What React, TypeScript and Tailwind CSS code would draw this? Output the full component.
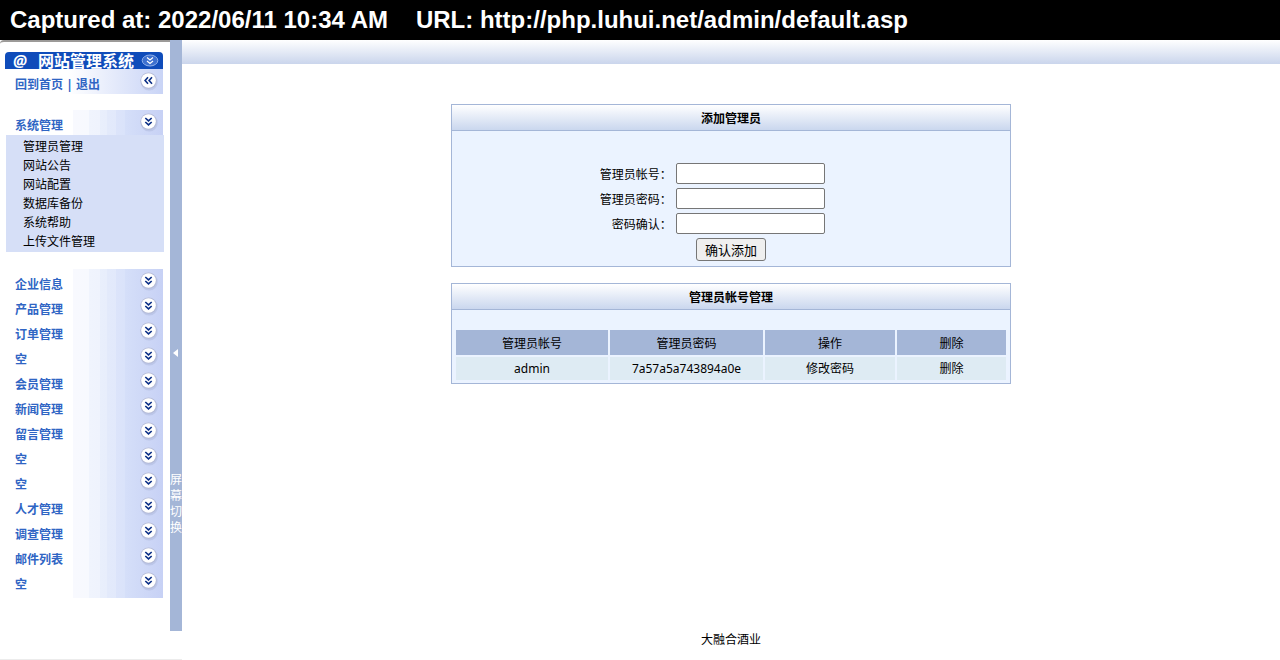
import { useState } from "react";

const topMenus = ["企业信息", "产品管理", "订单管理", "空", "会员管理", "新闻管理", "留言管理", "空", "空", "人才管理", "调查管理", "邮件列表", "空"];

const systemLinks = ["管理员管理", "网站公告", "网站配置", "数据库备份", "系统帮助", "上传文件管理"];

const formFields = [
  { id: "account", label: "管理员帐号：", type: "text" },
  { id: "password", label: "管理员密码：", type: "password" },
  { id: "confirm", label: "密码确认：", type: "password" },
];

const admins = [{ id: 1, name: "admin", password: "7a57a5a743894a0e" }];

// banded blue strip behind the round icons
const stripClass =
  "bg-[linear-gradient(to_right,#f8f9fe_0px,#f7f9fe_16px,#f0f4fd_16px,#eff3fd_27px,#e9effc_27px,#e8eefc_34px,#e3eafb_34px,#e2e9fb_43px,#dce4fa_43px,#dae3fa_52px,#d5dff9_52px,#c7d1f5_90px)]";

const RoundIcon = ({ left = false }: { left?: boolean }) => (
  <svg width="20" height="20" viewBox="0 0 20 20" aria-hidden="true">
    <circle cx="10.2" cy="10.8" r="8.6" fill="#a9b3d8" opacity="0.45" />
    <circle cx="9.6" cy="9.6" r="8.2" fill="#b4bad6" />
    <circle cx="9.5" cy="9.5" r="7.3" fill="#fff" />
    <g fill="none" stroke="#0b2f86" strokeWidth="1.6" transform={left ? "rotate(90 9.5 9.5)" : undefined}>
      <path d="M6.3 6 L9.5 8.9 L12.7 6" />
      <path d="M6.3 10 L9.5 12.9 L12.7 10" />
    </g>
  </svg>
);

const MenuTitle = ({ title }: { title: string }) => (
  <button className="flex h-[25px] w-full text-left font-bold text-[#2f65c4]">
    <span className="w-[68px] shrink-0 pt-2 pl-2.5 leading-4">{title}</span>
    <span className={`flex h-full flex-1 justify-end pt-0.5 pr-1 ${stripClass}`}>
      <RoundIcon />
    </span>
  </button>
);

const Panel = ({ title, children }: { title: string; children: React.ReactNode }) => (
  <section className="w-[560px] max-w-full border border-[#a4b6d7] bg-[#ebf3ff]">
    <h2 className="h-[26px] border-b border-[#a4b6d7] bg-linear-to-b from-white to-[#cad7ee] text-center leading-7 font-bold">
      {title}
    </h2>
    {children}
  </section>
);

const App = () => {
  const [sidebarOpen, setSidebarOpen] = useState(true);

  return (
    <div className="flex min-h-screen flex-col bg-white font-['Noto_Sans','Noto_Sans_CJK_SC',sans-serif] text-[12px] leading-4 text-black">
      {/* Capture bar */}
      <header className="flex h-10 items-center gap-7 bg-black px-2.5 font-['Liberation_Sans',Arial,sans-serif] text-2xl font-bold text-white">
        <span>Captured at: 2022/06/11 10:34 AM</span>
        <span>URL: http://php.luhui.net/admin/default.asp</span>
      </header>

      <div className="flex flex-1">
        {/* Left frame */}
        <div className="flex flex-col border-b border-[#ececec] pb-7">
          <div className="flex flex-1">
            {sidebarOpen && (
              <nav className="w-[170px] rounded-tl border-t-2 border-[#9c9a98] pt-2.5 pr-[7px] pl-[5px]">
                <div className="flex h-[17px] items-center rounded-t-sm bg-[#0f4cba] pr-1 pl-2 text-white">
                  <span className="w-[25px] text-[16px] leading-3 font-bold italic">@</span>
                  <span className="text-[16px] leading-3 font-bold">网站管理系统</span>
                  <svg className="ml-auto" width="18" height="13" viewBox="0 0 18 13" aria-hidden="true">
                    <ellipse cx="9" cy="6.5" rx="7.8" ry="5.5" fill="#3d70cf" stroke="#8fb0ea" />
                    <path d="M6 3.5 L9 6 L12 3.5 M6 7 L9 9.5 L12 7" fill="none" stroke="#fff" strokeWidth="1.2" />
                  </svg>
                </div>
                <div className="flex h-[25px] bg-linear-to-r from-white from-40% to-[#c9d4f6] pr-1 pl-2.5 text-[#2f65c4]">
                  <p className="pt-2 leading-4 font-bold">
                    <a href="#home">回到首页</a> | <a href="#logout">退出</a>
                  </p>
                  <span className="ml-auto pt-0.5">
                    <RoundIcon left />
                  </span>
                </div>

                <div className="mt-4">
                  <MenuTitle title="系统管理" />
                </div>
                <ul className="-mr-px ml-px bg-[#d6dff7] pt-0.5 pb-px pl-[17px] leading-[19px]">
                  {systemLinks.map((link) => (
                    <li key={link}>
                      <a href="#admin">{link}</a>
                    </li>
                  ))}
                </ul>

                <div className="mt-[17px]">
                  {topMenus.map((title, i) => (
                    <MenuTitle key={i} title={title} />
                  ))}
                  <div className={`ml-[68px] h-1 ${stripClass}`} />
                </div>
              </nav>
            )}
            <button
              className="flex w-3 flex-col items-center justify-start bg-[#a4b6d7] pt-[309px] text-white"
              onClick={() => setSidebarOpen(!sidebarOpen)}
            >
              <svg width="6" height="8" viewBox="0 0 6 8" aria-hidden="true">
                <path d="M5 0 V8 L0 4 Z" fill="#fff" />
              </svg>
              <span className="mt-[115px] w-3 leading-4 break-all">屏幕切换</span>
            </button>
          </div>
        </div>

        {/* Content frame */}
        <main className="flex min-w-0 flex-1 flex-col items-center">
          <div className="h-6 w-full bg-linear-to-b from-white to-[#cad5ec]" />

          <div className="mt-10 flex max-w-full flex-col gap-4">
            <Panel title="添加管理员">
              <form className="pt-[30px] pb-1" onSubmit={(e) => e.preventDefault()}>
                {formFields.map((field) => (
                  <div key={field.id} className="flex h-[25px] items-center pl-px">
                    <label htmlFor={field.id} className="w-2/5 pt-0.5 pr-1 text-right">
                      {field.label}
                    </label>
                    <input
                      id={field.id}
                      type={field.type}
                      className="h-[21px] w-[149px] rounded-xs border border-[#767676] bg-white px-0.5"
                    />
                  </div>
                ))}
                <div className="flex h-[26px] items-center justify-center">
                  <button
                    type="submit"
                    className="h-[23px] rounded-[3px] border border-[#767676] bg-[#efefef] px-2 pt-0.5 text-[13px]"
                  >
                    确认添加
                  </button>
                </div>
              </form>
            </Panel>

            <Panel title="管理员帐号管理">
              <div className="px-0.5 pt-[18px] pb-px">
                <table className="w-full table-fixed border-separate border-spacing-0.5 text-center">
                  <thead>
                    <tr className="h-[25px] bg-[#a4b6d7]">
                      <th className="w-[152px] pt-0.5 font-normal">管理员帐号</th>
                      <th className="w-[153px] pt-0.5 font-normal">管理员密码</th>
                      <th className="w-[130px] pt-0.5 font-normal">操作</th>
                      <th className="pt-0.5 font-normal">删除</th>
                    </tr>
                  </thead>
                  <tbody>
                    {admins.map((admin) => (
                      <tr key={admin.id} className="h-[23px] bg-[#deebf3]">
                        <td>{admin.name}</td>
                        <td>{admin.password}</td>
                        <td>
                          <a href="#edit">修改密码</a>
                        </td>
                        <td>
                          <a href="#delete">删除</a>
                        </td>
                      </tr>
                    ))}
                  </tbody>
                </table>
              </div>
            </Panel>
          </div>

          <footer className="mt-auto pb-3">大融合酒业</footer>
        </main>
      </div>
    </div>
  );
};

export default App;
